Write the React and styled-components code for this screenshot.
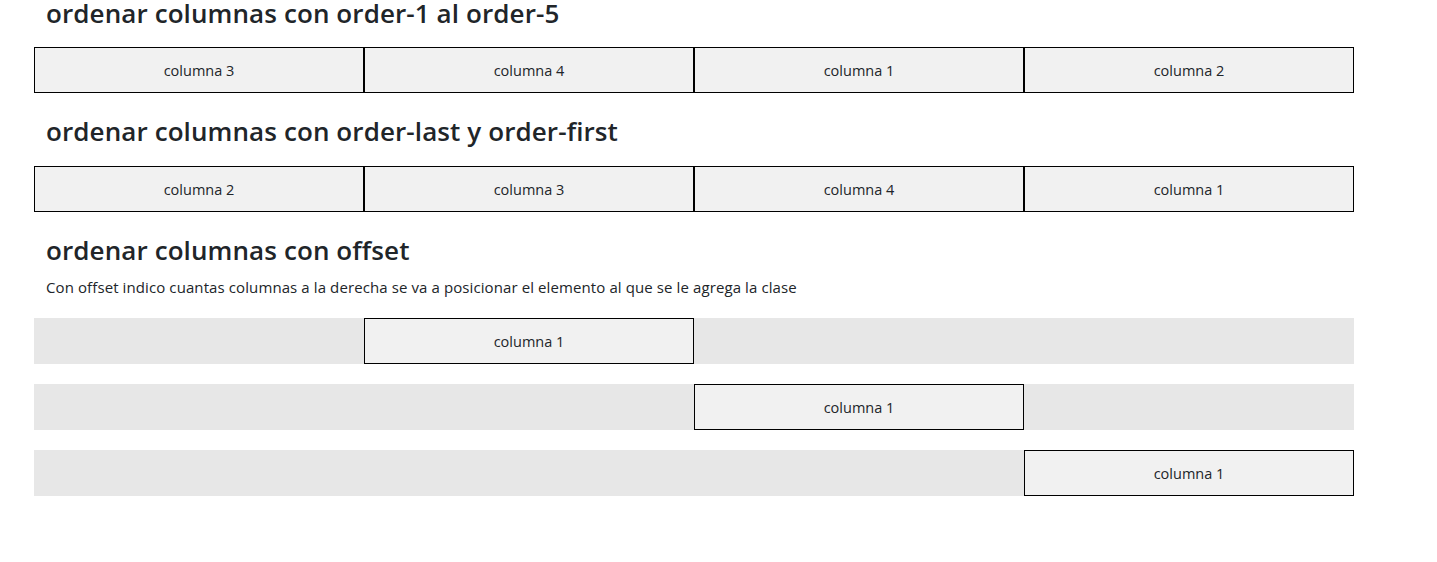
import React from "react";
import styled, { createGlobalStyle } from "styled-components";

const GlobalStyle = createGlobalStyle`
  body {
    margin: 0;
    background: #fff;
    color: #212529;
    font-family: "Open Sans", "Noto Sans", sans-serif;
  }
`;

const Container = styled.div`
  width: 1320px;
  margin-left: 34px;
  display: flex;
  flex-direction: column;
`;

const Title = styled.h3`
  margin: ${(p) => p.$top}px 0 0 12px;
  font-size: 26px;
  line-height: 34px;
  font-weight: 600;
  letter-spacing: 0.1px;
  color: #212529;
`;

const Text = styled.p`
  margin: 8px 0 0 12px;
  font-size: 15px;
  line-height: 24px;
  letter-spacing: 0.1px;
`;

const Row = styled.div`
  display: flex;
  margin-top: ${(p) => p.$top}px;
  background: ${(p) => (p.$shaded ? "#e7e7e7" : "transparent")};
`;

const Col = styled.div`
  width: 330px;
  height: 46px;
  box-sizing: border-box;
  margin-left: ${(p) => (p.$offset || 0) * 330}px;
  display: flex;
  align-items: center;
  justify-content: center;
  border: 1px solid #000;
  background: #f1f1f1;
  font-size: 14.5px;
  color: #212529;
`;

export default function App() {
  return (
    <>
      <GlobalStyle />
      <Container>
        <Title $top={-4}>ordenar columnas con order-1 al order-5</Title>
        <Row $top={17}>
          <Col>columna 3</Col>
          <Col>columna 4</Col>
          <Col>columna 1</Col>
          <Col>columna 2</Col>
        </Row>

        <Title $top={21}>ordenar columnas con order-last y order-first</Title>
        <Row $top={18}>
          <Col>columna 2</Col>
          <Col>columna 3</Col>
          <Col>columna 4</Col>
          <Col>columna 1</Col>
        </Row>

        <Title $top={21}>ordenar columnas con offset</Title>
        <Text>Con offset indico cuantas columnas a la derecha se va a posicionar el elemento al que se le agrega la clase</Text>
        <Row $top={19} $shaded>
          <Col $offset={1}>columna 1</Col>
        </Row>
        <Row $top={20} $shaded>
          <Col $offset={2}>columna 1</Col>
        </Row>
        <Row $top={20} $shaded>
          <Col $offset={3}>columna 1</Col>
        </Row>
      </Container>
    </>
  );
}
